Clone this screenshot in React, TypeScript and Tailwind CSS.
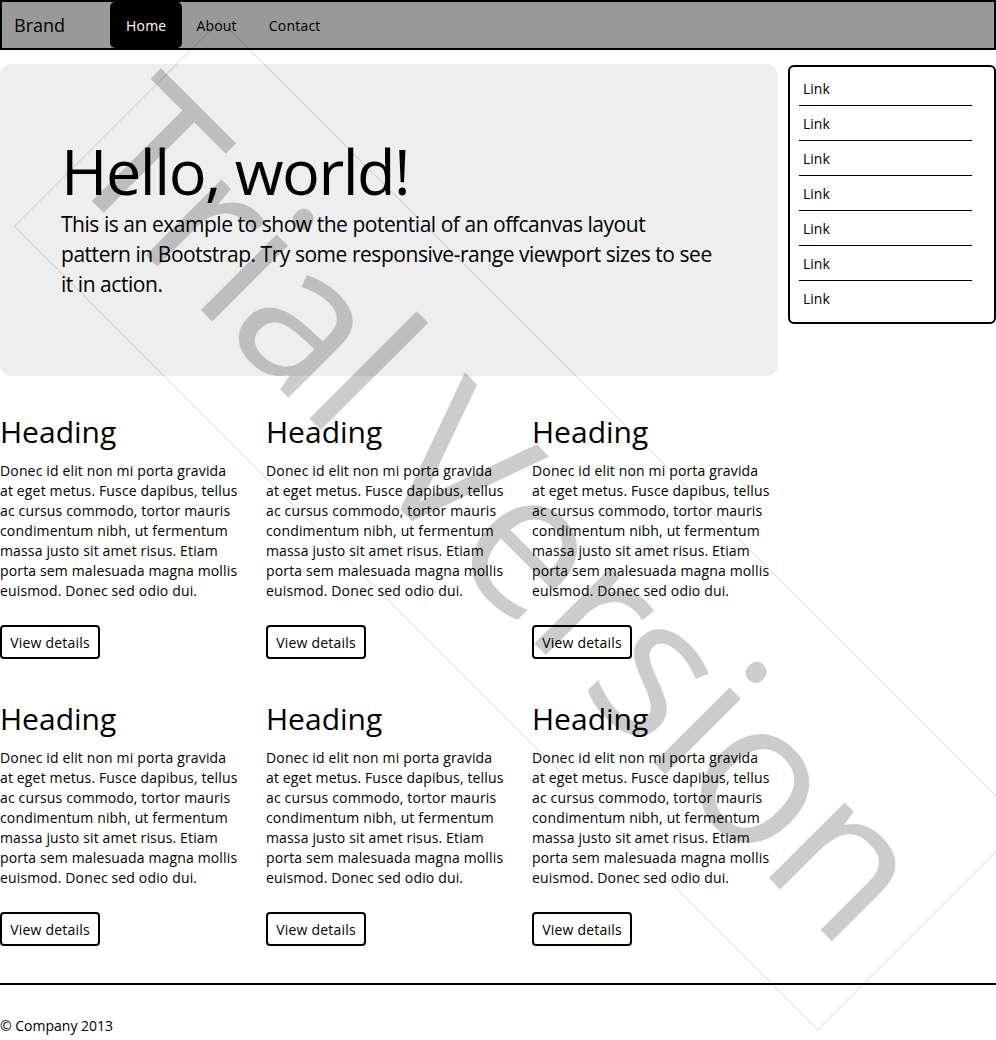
import React from "react";

const para =
  "Donec id elit non mi porta gravida at eget metus. Fusce dapibus, tellus ac cursus commodo, tortor mauris condimentum nibh, ut fermentum massa justo sit amet risus. Etiam porta sem malesuada magna mollis euismod. Donec sed odio dui.";

function Card() {
  return (
    <div className="flex flex-col items-start">
      <h2 className="text-[30px] leading-[33px] font-normal">Heading</h2>
      <p className="mt-[13px] w-[241px] text-[14px] leading-[20px] tracking-[0.15px]">{para}</p>
      <button className="mt-[24px] flex h-[34px] w-[100px] items-center justify-center rounded-[4px] border-2 border-black bg-white text-[14px] tracking-[0.2px]">
        View details
      </button>
    </div>
  );
}

export default function App() {
  const links = ["Link", "Link", "Link", "Link", "Link", "Link", "Link"];
  return (
    <div className="relative h-[1040px] w-[996px] overflow-hidden bg-white text-black font-['Open_Sans',sans-serif]">
      {/* Navbar */}
      <nav className="flex h-[50px] w-[996px] items-stretch border-2 border-black bg-[#999999]">
        <div className="flex w-[108px] items-center pl-[12px] text-[18px]">Brand</div>
        <a className="flex items-center rounded-[5px] bg-black px-[16px] text-[14px] tracking-[0.2px] text-white">Home</a>
        <a className="flex items-center pl-[14px] pr-[16px] text-[14px] tracking-[0.2px]">About</a>
        <a className="flex items-center pl-[16px] pr-[15px] text-[14px] tracking-[0.2px]">Contact</a>
      </nav>

      {/* Top row */}
      <div className="mt-[14px] flex items-start">
        <div className="w-[778px] rounded-[12px] bg-[#eeeeee] pb-[77px] pl-[61px] pt-[72px]">
          <h1 className="text-[63px] leading-[69px] font-normal tracking-[-1.5px]">Hello, world!</h1>
          <p className="mt-[4px] w-[658px] text-[21px] leading-[30px] tracking-[-0.46px]">
            This is an example to show the potential of an offcanvas layout pattern in Bootstrap. Try some
            responsive-range viewport sizes to see it in action.
          </p>
        </div>
        <div className="ml-[10px] mt-[1px] w-[208px] rounded-[6px] border-2 border-black pb-[6px] pl-[9px] pr-[22px] pt-[4px]">
          {links.map((l, i) => (
            <a
              key={i}
              className={`flex h-[35px] items-center pl-[4px] text-[14px] ${i < links.length - 1 ? "border-b border-black" : ""}`}
            >
              {l}
            </a>
          ))}
        </div>
      </div>

      {/* Columns */}
      <div className="mt-[39px] grid grid-cols-[266px_266px_266px] gap-y-[43px]">
        <Card />
        <Card />
        <Card />
        <Card />
        <Card />
        <Card />
      </div>

      <div className="mt-[37px] h-[2px] w-full bg-black" />
      <footer className="mt-[31px] text-[14px] leading-[20px]">© Company 2013</footer>

      {/* Watermark */}
      <div className="pointer-events-none absolute left-[519px] top-[525px] flex h-[292px] w-[1137px] -translate-x-1/2 -translate-y-1/2 rotate-45 items-center justify-center border border-black/[0.13]">
        <span className="-translate-x-[25px] -translate-y-[4px] whitespace-nowrap text-[200px] leading-none tracking-[-4px] text-black/20">
          Trial Version
        </span>
      </div>
    </div>
  );
}
